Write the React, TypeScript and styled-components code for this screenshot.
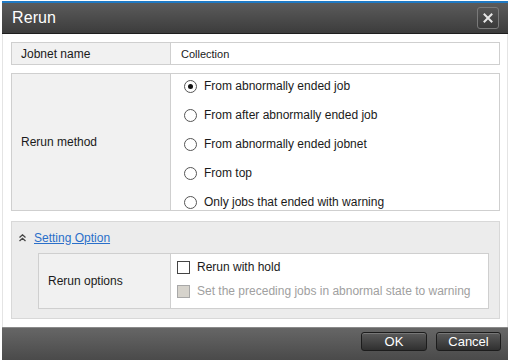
import styled, { createGlobalStyle } from "styled-components"

const GlobalStyle = createGlobalStyle`
	html, body {
		margin: 0;
		padding: 0;
		background: #ffffff;
		font-family: "Liberation Sans", Arial, sans-serif;
		font-size: 12px;
		color: #1a1a1a;
	}
`

const Dialog = styled.div`
	margin: 1px 3px 0 2px;
	width: 506px;
	height: 359px;
	display: flex;
	flex-direction: column;
	border-top: 2px solid #1f7ac4;
	box-sizing: border-box;
`

const TitleBar = styled.div`
	height: 30px;
	display: flex;
	align-items: center;
	justify-content: space-between;
	padding: 0 9px 0 10px;
	background: linear-gradient(#5b5b5b, #3c3c3c);
	border-bottom: 1px solid #1e1e1e;
`

const Title = styled.span`
	color: #ffffff;
	font-size: 16px;
	letter-spacing: 0.1px;
`

const CloseButton = styled.div`
	width: 20px;
	height: 20px;
	border: 1px solid #7a7a7a;
	border-radius: 3px;
	background: linear-gradient(#555555, #3a3a3a);
	display: flex;
	align-items: center;
	justify-content: center;
`

const Body = styled.div`
	flex: 1;
	display: flex;
	flex-direction: column;
	padding: 8px 7px 0 8px;
	background: #ffffff;
	border-left: 1px solid #e4e4e4;
	border-right: 1px solid #e4e4e4;
`

const Row = styled.div<{ $height: number; $gap?: number }>`
	display: flex;
	height: ${(p) => p.$height}px;
	border: 1px solid #cfcfcf;
	margin-bottom: ${(p) => p.$gap ?? 8}px;
	box-sizing: border-box;
`

const Label = styled.div<{ $width: number }>`
	width: ${(p) => p.$width}px;
	flex-shrink: 0;
	display: flex;
	align-items: center;
	padding-left: 9px;
	background: #f1f1f1;
	border-right: 1px solid #cfcfcf;
	box-sizing: border-box;
`

const Value = styled.div`
	flex: 1;
	display: flex;
	align-items: center;
	padding-left: 10px;
	background: #ffffff;
	font-size: 11px;
`

const OptionList = styled.div`
	flex: 1;
	display: flex;
	flex-direction: column;
	justify-content: space-between;
	padding: 4px 0 0 13px;
	background: #ffffff;
`

const Option = styled.div<{ $disabled?: boolean }>`
	display: flex;
	align-items: center;
	gap: 7px;
	height: 16px;
	color: ${(p) => (p.$disabled ? "#a0a0a0" : "#1a1a1a")};
`

const Radio = styled.span<{ $checked?: boolean }>`
	width: 11px;
	height: 11px;
	border: 1px solid #555555;
	border-radius: 50%;
	background: #ffffff;
	display: flex;
	align-items: center;
	justify-content: center;
	flex-shrink: 0;

	&::after {
		content: "";
		display: ${(p) => (p.$checked ? "block" : "none")};
		width: 5px;
		height: 5px;
		border-radius: 50%;
		background: #111111;
	}
`

const Checkbox = styled.span<{ $disabled?: boolean }>`
	width: 11px;
	height: 11px;
	border: 1px solid ${(p) => (p.$disabled ? "#a8a8a8" : "#444444")};
	background: ${(p) => (p.$disabled ? "#d6d3cc" : "#ffffff")};
	flex-shrink: 0;
`

const SettingBox = styled.div`
	height: 98px;
	border: 1px solid #d8d8d8;
	background: #ececec;
	box-sizing: border-box;
	display: flex;
	flex-direction: column;
	padding: 0 10px 9px 26px;
`

const SettingHeader = styled.div`
	display: flex;
	align-items: center;
	gap: 8px;
	height: 31px;
	margin-left: -19px;
`

const SettingLink = styled.a`
	color: #2a6fc9;
	text-decoration: underline;
	font-size: 12px;
`

const InnerRow = styled.div`
	display: flex;
	flex: 1;
	border: 1px solid #cfcfcf;
`

const CheckList = styled.div`
	flex: 1;
	display: flex;
	flex-direction: column;
	justify-content: space-between;
	padding: 5px 0 9px 6px;
	background: #ffffff;
`

const Footer = styled.div`
	height: 33px;
	display: flex;
	align-items: flex-start;
	justify-content: flex-end;
	gap: 9px;
	padding: 4px 7px 0 0;
	background: linear-gradient(#666666, #4a4a4a);
	border-top: 1px solid #8a8a8a;
	box-sizing: border-box;
`

const Button = styled.div<{ $width: number }>`
	width: ${(p) => p.$width}px;
	height: 19px;
	box-sizing: border-box;
	display: flex;
	align-items: center;
	justify-content: center;
	border: 1px solid #1c1c1c;
	border-radius: 3px;
	background: linear-gradient(#5a5a5a, #303030);
	box-shadow: inset 0 1px 0 #777777;
	color: #ffffff;
	font-size: 13px;
`

const methods = [
	"From abnormally ended job",
	"From after abnormally ended job",
	"From abnormally ended jobnet",
	"From top",
	"Only jobs that ended with warning",
]

export default function App() {
	return (
		<>
			<GlobalStyle />
			<Dialog>
				<TitleBar>
					<Title>Rerun</Title>
					<CloseButton>
						<svg width="12" height="12" viewBox="0 0 12 12">
							<path d="M2.5 2.5 L9.5 9.5 M9.5 2.5 L2.5 9.5" stroke="#e6e6e6" strokeWidth="2" strokeLinecap="square" />
						</svg>
					</CloseButton>
				</TitleBar>
				<Body>
					<Row $height={23}>
						<Label $width={159}>Jobnet name</Label>
						<Value>Collection</Value>
					</Row>
					<Row $height={138} $gap={10}>
						<Label $width={159}>Rerun method</Label>
						<OptionList>
							{methods.map((m, i) => (
								<Option key={m}>
									<Radio $checked={i === 0} />
									{m}
								</Option>
							))}
						</OptionList>
					</Row>
					<SettingBox>
						<SettingHeader>
							<svg width="7" height="8" viewBox="0 0 7 8">
								<path d="M0.5 3.5 L3.5 0.8 L6.5 3.5 M0.5 7 L3.5 4.3 L6.5 7" stroke="#444444" strokeWidth="1.3" fill="none" />
							</svg>
							<SettingLink>Setting Option</SettingLink>
						</SettingHeader>
						<InnerRow>
							<Label $width={132}>Rerun options</Label>
							<CheckList>
								<Option>
									<Checkbox />
									Rerun with hold
								</Option>
								<Option $disabled>
									<Checkbox $disabled />
									Set the preceding jobs in abnormal state to warning
								</Option>
							</CheckList>
						</InnerRow>
					</SettingBox>
				</Body>
				<Footer>
					<Button $width={66}>OK</Button>
					<Button $width={65}>Cancel</Button>
				</Footer>
			</Dialog>
		</>
	)
}
